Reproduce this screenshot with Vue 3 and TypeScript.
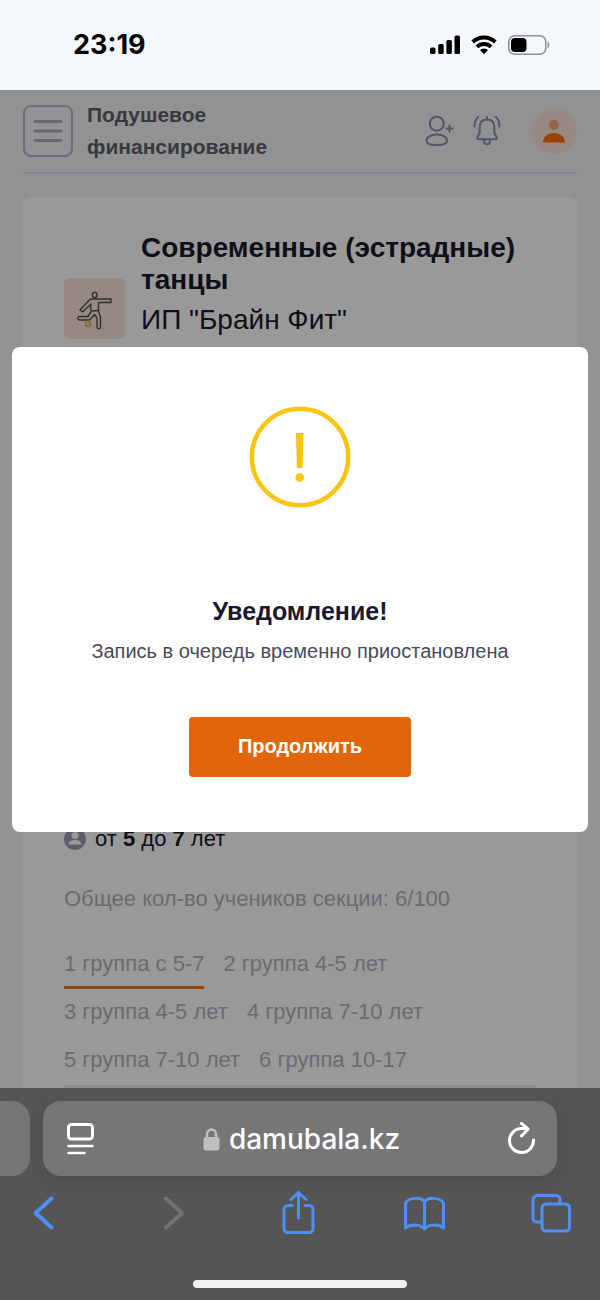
<script setup lang="ts">
import { ref } from 'vue'

const groups: string[] = [
  '1 группа с 5-7',
  '2 группа 4-5 лет',
  '3 группа 4-5 лет',
  '4 группа 7-10 лет',
  '5 группа 7-10 лет',
  '6 группа 10-17',
]
const activeGroup = ref(0)
const noticeOpen = ref(true)
</script>

<template>
  <div class="phone">
    <div class="status">
      <time class="clock">23:19</time>
      <div class="signals">
        <svg width="30" height="20" viewBox="0 0 30 20">
          <rect x="0" y="12.5" width="5.5" height="6.5" rx="1.6" />
          <rect x="8.2" y="9" width="5.5" height="10" rx="1.6" />
          <rect x="16.4" y="5" width="5.5" height="14" rx="1.6" />
          <rect x="24.5" y="0.5" width="5.5" height="18.5" rx="1.6" />
        </svg>
        <svg width="26" height="20" viewBox="0 0 26 20" fill="none" stroke="#000" stroke-width="4">
          <path d="M1.7 7a16.2 16.2 0 0 1 22.6 0" />
          <path d="M6 11.900a10 10 0 0 1 14 0" />
          <path d="M13 19.200l-4-4.100a5.600 5.600 0 0 1 8 0z" fill="#000" stroke="none" />
        </svg>
        <svg width="42" height="20" viewBox="0 0 42 20">
          <rect x="0.8" y="0.8" width="37" height="18.4" rx="6" fill="none" stroke="#8f9294" stroke-width="1.6" />
          <rect x="3" y="3" width="15.5" height="14" rx="4" />
          <path d="M39.6 6.6c2.4 1 2.4 5.800 0 6.800z" fill="#8f9294" />
        </svg>
      </div>
    </div>

    <main class="site">
      <header class="top">
        <button class="burger" type="button" aria-label="Меню">
          <svg width="30" height="24" viewBox="0 0 30 24" stroke="#acaec0" stroke-width="3" stroke-linecap="round">
            <path d="M2 2.500h26M2 12h26M2 21.500h26" />
          </svg>
        </button>
        <p class="brand">Подушевое финансирование</p>
        <nav class="actions">
          <button type="button" aria-label="Добавить">
            <svg width="30" height="32" viewBox="0 0 30 32" fill="none" stroke="#8d8fa8" stroke-width="2" stroke-linecap="round">
              <circle cx="11.800" cy="8.700" r="7" />
              <path d="M11.800 19.500c6 0 10.200 2.800 10.200 6.200 0 3.300-3.800 4.300-10.200 4.300S1.500 29 1.500 25.700c0-3.400 4.300-6.200 10.300-6.200z" />
              <path d="M21.500 13.500h6M24.500 10.500v6" />
            </svg>
          </button>
          <button type="button" aria-label="Уведомления">
            <svg width="28" height="32" viewBox="0 0 28 32" fill="none" stroke="#8d8fa8" stroke-width="2" stroke-linecap="round" stroke-linejoin="round">
              <path d="M14 4.500c-5 0-7.300 3.200-7.300 7.500v5.500L4.400 22.500c-.3 1 .2 1.800 1.200 1.800h16.800c1 0 1.500-.8 1.200-1.800L21.300 17.500V12c0-4.300-2.300-7.500-7.300-7.500zM14 2v2" />
              <path d="M11 25v1.300a3 3 0 0 0 6 0V25" />
              <path d="M5.200 2C2.800 4 1.500 7.500 1.500 11.500M22.800 2c2.400 2 3.700 5.500 3.700 9.500" />
            </svg>
          </button>
          <button class="avatar" type="button" aria-label="Профиль">
            <svg width="24" height="24" viewBox="0 0 24 24">
              <circle cx="12" cy="6" r="5" fill="#f4ad7c" />
              <path d="M1 23.500c0-6 5-9.500 11-9.500s11 3.500 11 9.500z" fill="#ff7000" />
            </svg>
          </button>
        </nav>
      </header>

      <article class="card">
        <div class="intro">
          <div class="sport">
            <svg width="61" height="61" viewBox="0 0 61 61" fill="none" stroke="#594c47" stroke-width="1.400" stroke-linejoin="round">
              <rect x="28.500" y="14.500" width="4.500" height="5" rx="2" />
              <path d="M26.500 21H47V24.500H34.500V32.500L28 33L26.500 30.500L27 26L18.500 34L16 32Z" />
              <path d="M27.500 33L24 38.500H15.500A1.500 1.500 0 0 0 15.500 42H25.500L30.500 36.500L33 40V49A1.500 1.500 0 0 0 36.500 49V38.500L34 32.500" />
              <circle cx="24" cy="46" r="2.300" stroke="#e8b880" stroke-width="2.600" />
            </svg>
          </div>
          <div class="names">
            <h1>Современные (эстрадные) танцы</h1>
            <p>ИП "Брайн Фит"</p>
          </div>
        </div>

        <div class="details">
          <p class="age">
            <svg width="22" height="22" viewBox="0 0 22 22">
              <circle cx="11" cy="11" r="11" fill="#9a9bae" />
              <circle cx="11" cy="7.500" r="3.600" fill="#fff" />
              <path d="M4.500 16.500c0-3 3-4.500 6.500-4.500s6.500 1.500 6.500 4.500z" fill="#fff" />
            </svg>
            <span>от <b>5</b> до <b>7</b> лет</span>
          </p>
          <p class="total">Общее кол-во учеников секции: 6/100</p>
          <div class="groups" role="tablist">
            <button
              v-for="(group, i) in groups"
              :key="group"
              type="button"
              role="tab"
              :aria-selected="i === activeGroup"
              :class="{ active: i === activeGroup }"
              @click="activeGroup = i"
            >{{ group }}</button>
          </div>
        </div>
      </article>

      <div v-if="noticeOpen" class="overlay">
        <section class="modal" role="dialog" aria-modal="true" aria-labelledby="notice-title">
          <svg width="102" height="102" viewBox="0 0 102 102">
            <circle cx="51" cy="51" r="48.200" fill="none" stroke="#fac50e" stroke-width="4.600" />
            <path d="M47 27h7.400l-.8 35h-5.800z" fill="#fac50e" />
            <circle cx="50.700" cy="71.500" r="4.300" fill="#fac50e" />
          </svg>
          <h2 id="notice-title">Уведомление!</h2>
          <p>Запись в очередь временно приостановлена</p>
          <button type="button" @click="noticeOpen = false">Продолжить</button>
        </section>
      </div>
    </main>

    <footer class="browser">
      <div class="addresses">
        <div class="neighbour"></div>
        <div class="address">
          <button type="button" aria-label="Параметры страницы">
            <svg width="30" height="34" viewBox="0 0 30 34" fill="none" stroke="#fff" stroke-width="3" stroke-linecap="round">
              <rect x="2.500" y="2.500" width="24" height="14.500" rx="3" />
              <path d="M2.500 24h24M2.500 31h16" stroke-width="2.600" />
            </svg>
          </button>
          <button class="url" type="button">
            <svg width="17" height="24" viewBox="0 0 17 24">
              <path d="M4 11V7a4.500 4.500 0 0 1 9 0v4" fill="none" stroke="#bfbfc2" stroke-width="2.400" />
              <rect x="0.500" y="10" width="16" height="13.500" rx="2.500" fill="#bfbfc2" />
            </svg>
            <span>damubala.kz</span>
          </button>
          <button type="button" aria-label="Обновить">
            <svg width="30" height="34" viewBox="0 0 30 34" fill="none" stroke="#fff" stroke-width="3" stroke-linecap="round" stroke-linejoin="round">
              <path d="M26.500 18a12 12 0 1 1-12-11.500h6M14.500 1.500l6.500 5.500-6.500 7" />
            </svg>
          </button>
        </div>
      </div>
      <nav class="tools">
        <button type="button" aria-label="Назад">
          <svg width="44" height="44" viewBox="0 0 44 44"><path d="M30.500 7.500L14.500 22 30.500 36.500" stroke-width="4" /></svg>
        </button>
        <button type="button" aria-label="Вперёд" disabled>
          <svg width="44" height="44" viewBox="0 0 44 44"><path d="M18 7.500l16 14.500-16 14.500" stroke-width="4" /></svg>
        </button>
        <button type="button" aria-label="Поделиться">
          <svg width="44" height="44" viewBox="0 0 44 44"><path d="M17 14.500h-4a4 4 0 0 0-4 4v19a4 4 0 0 0 4 4h21a4 4 0 0 0 4-4v-19a4 4 0 0 0-4-4h-4M23.500 27V2M16 8.500L23.500 1.500 31 8.500" /></svg>
        </button>
        <button type="button" aria-label="Закладки">
          <svg width="44" height="44" viewBox="0 0 44 44"><path d="M22.500 11c-3-5-15-5-19 1v25c5-4 15-4 19 1 4-5 14-5 19-1V12c-4-6-16-6-19-1zM22.500 11v26" /></svg>
        </button>
        <button type="button" aria-label="Вкладки">
          <svg width="44" height="44" viewBox="0 0 44 44"><rect x="13" y="13" width="27.500" height="27" rx="4" /><path d="M13 31H8a4 4 0 0 1-4-4V9a4.500 4.500 0 0 1 4.500-4.500H27a4 4 0 0 1 4 4V13" /></svg>
        </button>
      </nav>
      <div class="home"></div>
    </footer>
  </div>
</template>

<style>
body {
  margin: 0;
}
</style>

<style scoped>
.phone {
  display: flex;
  flex-direction: column;
  min-height: 100vh;
  font-family: "Liberation Sans", Arial, sans-serif;
  background: #f4f8fb;
}
.phone * {
  box-sizing: border-box;
}
h1,
h2,
p {
  margin: 0;
}
button {
  padding: 0;
  border: 0;
  background: none;
  color: inherit;
  font: inherit;
  cursor: pointer;
}
svg {
  display: block;
  flex: none;
}
.status {
  display: flex;
  align-items: center;
  justify-content: space-between;
  height: 90px;
  padding: 0 50px 0 73px;
}
.clock {
  font: 700 27px/32px Inter, sans-serif;
}
.signals {
  display: flex;
  align-items: center;
  gap: 11px;
}
.site {
  position: relative;
  display: flex;
  flex: 1;
  flex-direction: column;
  overflow: hidden;
  background: #f1f4f7;
}
.top {
  display: flex;
  align-items: center;
  height: 84px;
  margin: 0 23px;
  border-bottom: 2px solid #dfe1e7;
}
.burger {
  display: grid;
  place-items: center;
  width: 50px;
  height: 52px;
  border: 2px solid #b6b8c2;
  border-radius: 8px;
}
.brand {
  width: 220px;
  margin-left: 14px;
  color: #606064;
  font-weight: 700;
  font-size: 21px;
  line-height: 32px;
}
.actions {
  display: flex;
  align-items: center;
  gap: 18px;
  margin-left: auto;
}
.avatar {
  display: grid;
  place-items: center;
  width: 46px;
  height: 46px;
  margin-left: 12px;
  border-radius: 50%;
  background: #fbe6d9;
}
.card {
  display: flex;
  flex: 1;
  flex-direction: column;
  justify-content: space-between;
  margin: 23px 23px 0;
  padding: 35px 41px 0;
  border-radius: 8px 8px 0 0;
  background: #fff;
}
.intro {
  display: flex;
  align-items: flex-end;
  gap: 16px;
  color: #19192f;
}
.sport {
  border-radius: 6px;
  background: #f8e4d9;
}
.names {
  flex: 1;
}
h1 {
  font-size: 28px;
  line-height: 32px;
}
.names p {
  margin-top: 5px;
  font-size: 28px;
  line-height: 38px;
}
.age {
  display: flex;
  align-items: center;
  gap: 9px;
  color: #19192f;
  font-size: 22px;
  line-height: 32px;
}
.age b {
  font-weight: 700;
}
.total {
  margin: 28px 0 26px;
  color: #b3b3bd;
  font-size: 22px;
  line-height: 32px;
}
.groups {
  display: flex;
  flex-wrap: wrap;
  column-gap: 19px;
  border-bottom: 3px solid #ededf0;
}
.groups button {
  height: 48px;
  border-bottom: 3px solid transparent;
  color: #b3b3bd;
  font-size: 22px;
}
.groups .active {
  border-color: #f07818;
}
.overlay {
  position: absolute;
  inset: 0;
  display: flex;
  align-items: center;
  padding: 0 12px;
  background: rgba(0, 0, 0, 0.4);
}
.modal {
  display: flex;
  flex: 1;
  flex-direction: column;
  align-items: center;
  padding: 59px 24px 55px;
  border-radius: 8px;
  background: #fff;
  text-align: center;
}
.modal h2 {
  margin-top: 87px;
  color: #19192f;
  font-size: 25px;
  line-height: 32px;
}
.modal p {
  margin-top: 8px;
  color: #4a4a5a;
  font-size: 20px;
  line-height: 32px;
}
.modal button {
  width: 222px;
  height: 60px;
  margin-top: 50px;
  border-radius: 4px;
  background: #e1650b;
  color: #fff;
  font-weight: 700;
  font-size: 20px;
}
.browser {
  display: flex;
  flex-direction: column;
  height: 212px;
  padding: 13px 0 12px;
  background: #555556;
  color: #fff;
}
.addresses {
  display: flex;
  gap: 13px;
  padding-right: 43px;
}
.neighbour {
  width: 30px;
  border-radius: 0 18px 18px 0;
  background: #767677;
}
.address {
  display: flex;
  flex: 1;
  align-items: center;
  justify-content: space-between;
  height: 75px;
  padding: 0 20px 0 23px;
  border-radius: 18px;
  background: #767677;
  box-shadow: 0 4px 16px rgba(0, 0, 0, 0.1);
}
.url {
  display: flex;
  align-items: center;
  gap: 9px;
  font: 500 28px/36px Inter, sans-serif;
}
.tools {
  display: flex;
  justify-content: space-between;
  padding: 15px 27px 0 21px;
}
.tools svg {
  fill: none;
  stroke: #4c90f7;
  stroke-width: 3;
  stroke-linecap: round;
  stroke-linejoin: round;
}
.tools button:disabled svg {
  stroke: #737374;
}
.home {
  width: 214px;
  height: 8px;
  margin: auto auto 0;
  border-radius: 4px;
  background: #f1f1f1;
}
</style>
